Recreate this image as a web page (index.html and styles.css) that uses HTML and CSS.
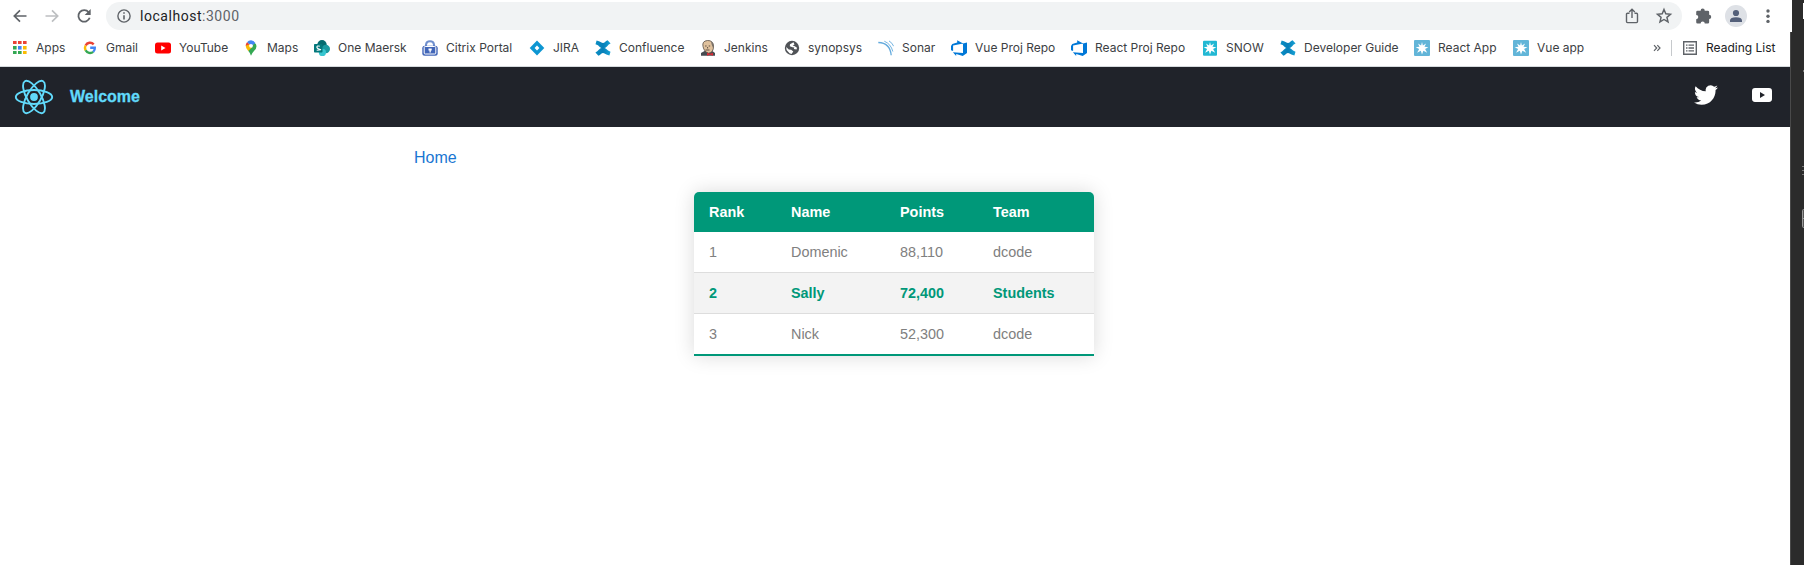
FILE: index.html
```html
<!DOCTYPE html>
<html lang="en">
<head>
<meta charset="utf-8">
<title>Welcome</title>
<link rel="stylesheet" href="styles.css">
</head>
<body>
<svg width="0" height="0" class="defs" aria-hidden="true">
  <defs>
    <linearGradient id="blue" x1="0" x2="1"><stop offset="0" stop-color="#0a8fc4"/><stop offset=".5" stop-color="#087fb8"/><stop offset="1" stop-color="#17a3d6"/></linearGradient>
    <symbol id="confluence" viewBox="0 0 16 16"><path fill="url(#blue)" d="M1.6.6 .5 4.3Q3.2 5 5 7.2 6.2 8.3 8 8.3 10.8 8.2 12.2 6.2 13.5 4.4 15.6 3.6L12.6.2Q11 .8 9.8 2.2 8.7 3.3 7 2.8 4.8 1.5 1.6.6z"/><path fill="url(#blue)" d="M14.4 15.4 15.5 11.7Q12.8 11 11 8.8 9.8 7.7 8 7.7 5.2 7.8 3.8 9.8 2.5 11.6.4 12.4L3.4 15.8Q5 15.2 6.2 13.8 7.3 12.7 9 13.2 11.2 14.5 14.4 15.4z"/></symbol>
    <symbol id="azure" viewBox="0 0 16 16"><path fill="#0078d7" d="M16 2.6V12.9L11.7 16 5.2 14.1V16L1.9 12.3 12 13V3.5zM12.1 3.5 6.2.2V2.4L1.3 4 0 5.9V10.2L2.1 11.1V5.4z"/></symbol>
    <symbol id="star" viewBox="0 0 16 16"><path fill="#fff" d="M8 2 8.9 5.5 12.1 3.4 10.5 6.8 14.4 7.3 11.1 9 13.2 12.7 9.4 10.7 8 14.5 6.8 10.7 3.1 12.7 5.1 9 1.6 7.3 5.5 6.8 4 3.4 7.1 5.5z"/></symbol>
  </defs>
</svg>
<div class="desktop">
  <div class="browser">
    <div class="toolbar">
      <svg class="nav" viewBox="0 0 16 16" fill="none" stroke="#5f6368" stroke-width="1.7"><path d="M14.5 8H2.5M8 2.3 2.3 8 8 13.7"/></svg>
      <svg class="nav" viewBox="0 0 16 16" fill="none" stroke="#bdbfc1" stroke-width="1.7"><path d="M1.5 8H13.5M8 2.3 13.7 8 8 13.7"/></svg>
      <svg class="nav reload" viewBox="0 0 16 16"><path d="M12.7 4.2A5.8 5.8 0 1 0 13.7 9.8" fill="none" stroke="#5f6368" stroke-width="1.8"/><path fill="#5f6368" d="M14.7 1V7H8.7z"/></svg>
      <div class="address">
        <svg class="info" viewBox="0 0 14 14"><circle cx="7" cy="7" r="6.1" fill="none" stroke="#5f6368" stroke-width="1.4"/><path fill="#5f6368" d="M6.2 3.3h1.6v1.5H6.2zM6.2 6.2h1.6v4.4H6.2z"/></svg>
        <span class="url">localhost<span>:3000</span></span>
        <svg class="share" viewBox="0 0 14 16" fill="none" stroke="#5f6368" stroke-width="1.4"><path d="M4.5 5.2H2.5Q1.5 5.2 1.5 6.2V13.5Q1.5 14.6 2.5 14.6H11.5Q12.5 14.6 12.5 13.5V6.2Q12.5 5.2 11.5 5.2H9.5M7 10V1.5M4.2 4 7 1.2 9.8 4"/></svg>
        <svg class="fav" viewBox="0 0 16 16"><path d="M8 2.2 9.6 6 13.8 6.4 10.6 9.2 11.6 13.3 8 11.1 4.4 13.3 5.4 9.2 2.2 6.4 6.4 6z" fill="none" stroke="#5f6368" stroke-width="1.3"/></svg>
      </div>
      <svg class="puzzle" viewBox="0.8 0.8 14.6 14.6"><path fill="#5f6368" d="M5 3.2A1.9 1.9 0 0 1 8.8 3.2H11.5Q12.8 3.2 12.8 4.5V7A1.9 1.9 0 0 1 12.8 10.8V13.7Q12.8 15 11.5 15H8.8A1.9 1.9 0 0 0 5 15H2.2Q1 15 1 13.7V11A1.9 1.9 0 0 0 1 7.2V4.5Q1 3.2 2.2 3.2z"/></svg>
      <svg class="avatar" viewBox="0 0 22 22"><circle cx="11" cy="11" r="11" fill="#dee1e6"/><circle cx="11" cy="8" r="3.1" fill="#54607a"/><path fill="#54607a" d="M5 17V15.2Q5.3 12.2 11 12.2T17 15.2V17z"/></svg>
      <svg class="more" viewBox="0 0 4 16" fill="#5f6368"><circle cx="2" cy="3" r="1.7"/><circle cx="2" cy="8.2" r="1.7"/><circle cx="2" cy="13.4" r="1.7"/></svg>
    </div>
    <div class="bookmarks">
      <div class="links">
        <div class="mark"><svg viewBox="0 0 16 16"><path fill="#ea4335" d="M1 1h3.6v3H1zM6 1h3.6v3H6zM11 1h3.6v3H11z"/><path fill="#34a853" d="M1 6h3.6v3.6H1zM1 11h3.6v3H1zM6 11h3.6v3H6z"/><path fill="#4285f4" d="M6 6h3.6v3.6H6z"/><path fill="#fbbc04" d="M11 6h3.6v3.6H11zM11 11h3.6v3H11z"/></svg><span>Apps</span></div>
        <div class="mark"><svg viewBox="0 0 16 16" fill="none" stroke-width="2.4"><path stroke="#ea4335" d="M3.6 5.5A5 5 0 0 1 11.7 4.3"/><path stroke="#fbbc04" d="M3.6 5.5A5 5 0 0 0 3.6 10.3"/><path stroke="#34a853" d="M3.6 10.3A5 5 0 0 0 11.2 11.8"/><path stroke="#4285f4" d="M11.2 11.8A5 5 0 0 0 12.8 7.8H8.2"/></svg><span>Gmail</span></div>
        <div class="mark"><svg viewBox="0 0 16 16"><rect y="2.5" width="16" height="11" rx="2.5" fill="#f00"/><path fill="#fff" d="M6.2 5.5v5L10.5 8z"/></svg><span>YouTube</span></div>
        <div class="mark"><svg viewBox="0 0 16 16"><path fill="#34a853" d="M8 15.7Q7.4 13.2 5 10.5L11.5 2.7Q13.5 4 13.5 6.2T11 11Q8.8 13.3 8 15.7z"/><path fill="#4285f4" d="M4 2.2 8.3 6.2 12.3 3Q10.8.3 8 .3 5.5.3 4 2.2z"/><path fill="#ea4335" d="M4 2.2 6.7 4.5 4.5 7.2 2.7 5.8Q2.6 3.8 4 2.2z"/><path fill="#fbbc04" d="M2.7 5.8 6.8 4.2 9.4 6.9 5.2 10.9Q2.7 8.3 2.7 5.8z"/><circle cx="8" cy="5.8" r="1.9" fill="#fff"/></svg><span>Maps</span></div>
        <div class="mark"><svg viewBox="0 0 16 16"><circle cx="8" cy="4.7" r="4.7" fill="#036c70"/><circle cx="11.8" cy="9" r="4.2" fill="#1a9ba1"/><circle cx="8.4" cy="12.4" r="3.6" fill="#37c6d0"/><rect y="4" width="8.5" height="8.5" rx=".7" fill="#03787c"/><path d="M5.8 6.3Q3 5.3 2.9 7T5.7 9.2 2.7 10.2" fill="none" stroke="#fff" stroke-width="1.1"/></svg><span>One Maersk</span></div>
        <div class="mark"><svg viewBox="0 0 16 16"><path d="M4 7V4.6Q4.4 1.3 8 1.3t4 3.3V7" fill="none" stroke="#6f8fce" stroke-width="2"/><rect x=".3" y="5.7" width="15.4" height="10" rx="2.5" fill="#4266b8"/><rect x="2.2" y="6.5" width="11.6" height="7.5" rx="1" fill="none" stroke="#fff" stroke-width="1"/><path d="M6.5 8.5h3.2v1.9h-.9V12.4H7.5v-2h-1z" fill="#fff"/></svg><span>Citrix Portal</span></div>
        <div class="mark"><svg viewBox="0 0 16 16"><path fill="#0d96d2" d="M8 .5 15.3 8 8 15.5.7 8z"/><path fill="#fff" d="M8 5.6 10.4 8 8 10.4 5.6 8z"/></svg><span>JIRA</span></div>
        <div class="mark"><svg><use href="#confluence"/></svg><span>Confluence</span></div>
        <div class="mark"><svg viewBox="0 0 16 16"><path d="M1 15.8V13L5 10.7h7l3 2.2v2.9z" fill="#454b50"/><path d="M3 6.5Q1.8 1 7.5.5q5.6-.2 6 5.5.2 6.5-4.8 7.2Q4.2 12 3 6.5z" fill="#dfc19d" stroke="#554b43" stroke-width=".8"/><path d="M11 1.7Q14.5 3 13.2 8L11.8 5z" fill="#77706a"/><path d="M5.1 6h1.5M8.7 6h1.5M7.6 7v1.5M5.5 10h4" stroke="#40352f" stroke-width=".8"/><path d="m7 12.7 3 1 3-1v3.1l-3-1-3 1z" fill="#d52b36"/></svg><span>Jenkins</span></div>
        <div class="mark"><svg viewBox="0 0 16 16"><circle cx="8" cy="8" r="7.2" fill="#505357"/><path fill="#fff" d="M9.5 2.2 6 4.2 5.8 6.3 8.5 7.2 10.3 7.5 9.8 9 12.5 9.5 13 7.8 10.8 6.3 8.7 5.5 10.5 4.5zM2.2 7 2.6 10 5.5 13.3 7.5 13.9 9.3 11.5 7.2 9.8 4.8 9.5z"/></svg><span>synopsys</span></div>
        <div class="mark"><svg viewBox="0 0 16 16" fill="none" stroke="#63aadd"><path d="M.3 2.5Q12 2.8 13.2 15.2" stroke-width="1.3"/><path d="M6.3 1.2Q13 4 14.8 11.5M11 .9Q14.4 3 15.6 6.2" stroke-width=".9"/></svg><span>Sonar</span></div>
        <div class="mark"><svg><use href="#azure"/></svg><span>Vue Proj Repo</span></div>
        <div class="mark"><svg><use href="#azure"/></svg><span>React Proj Repo</span></div>
        <div class="mark"><svg viewBox="0 0 16 16"><rect x="1" y=".7" width="14" height="15" rx="1" fill="#22b8d3"/><use href="#star"/></svg><span>SNOW</span></div>
        <div class="mark"><svg><use href="#confluence"/></svg><span>Developer Guide</span></div>
        <div class="mark"><svg viewBox="0 0 16 16"><rect width="16" height="16" rx="1" fill="#62b5d8"/><use href="#star"/></svg><span>React App</span></div>
        <div class="mark"><svg viewBox="0 0 16 16"><rect width="16" height="16" rx="1" fill="#62b5d8"/><use href="#star"/></svg><span>Vue app</span></div>
      </div>
      <svg class="overflow" viewBox="0 0 8 8" fill="none" stroke="#5f6368" stroke-width="1.2"><path d="M1 1.2 3.7 4 1 6.8M4.3 1.2 7 4 4.3 6.8"/></svg>
      <div class="reading">
        <svg viewBox="0 0 14 14" fill="none" stroke="#5f6368"><path stroke-width="1.4" d="M.7.7h12.6v12.6H.7z"/><path stroke-width="1.3" d="M3 4.2h1.5M5.5 4.2H11M3 7h1.5M5.5 7H11M3 9.8h1.5M5.5 9.8H11"/></svg>
        <span>Reading List</span>
      </div>
    </div>
    <header class="header">
      <svg class="react" viewBox="0 0 40 36" fill="none" stroke="#61dafb" stroke-width="1.9"><circle cx="20" cy="18" r="3.9" fill="#61dafb" stroke="none"/><ellipse cx="20" cy="18" rx="18.2" ry="7"/><ellipse cx="20" cy="18" rx="18.2" ry="7" transform="rotate(60 20 18)"/><ellipse cx="20" cy="18" rx="18.2" ry="7" transform="rotate(120 20 18)"/></svg>
      <span class="welcome">Welcome</span>
      <svg class="twitter" viewBox="0 0 24 24"><path fill="#fff" d="M23.95 4.57a10 10 0 0 1-2.82.77 4.96 4.96 0 0 0 2.16-2.72c-.95.55-2 .96-3.13 1.18a4.92 4.92 0 0 0-8.38 4.48C7.69 8.1 4.07 6.13 1.64 3.16a4.9 4.9 0 0 0 1.52 6.57 4.9 4.9 0 0 1-2.23-.61v.06a4.92 4.92 0 0 0 3.95 4.83 5 5 0 0 1-2.21.08 4.94 4.94 0 0 0 4.6 3.42A9.87 9.87 0 0 1 0 19.54a13.99 13.99 0 0 0 7.55 2.21c9.14 0 14.3-7.72 14.01-14.64a10 10 0 0 0 2.39-2.54z"/></svg>
      <svg class="youtube" viewBox="0 0 20 14"><path fill="#fff" fill-rule="evenodd" d="M3 0Q10-.5 17 0 20 .2 20 3v8q0 2.7-3 3-7 .5-14 0-3-.3-3-3V3Q0 .2 3 0zM8 4v6l5-3z"/></svg>
    </header>
    <main class="page">
      <a class="home">Home</a>
      <table class="scores">
        <colgroup><col class="rank"><col class="name"><col class="points"><col class="team"></colgroup>
        <thead><tr><th>Rank</th><th>Name</th><th>Points</th><th>Team</th></tr></thead>
        <tbody>
          <tr><td>1</td><td>Domenic</td><td>88,110</td><td>dcode</td></tr>
          <tr class="active"><td>2</td><td>Sally</td><td>72,400</td><td>Students</td></tr>
          <tr><td>3</td><td>Nick</td><td>52,300</td><td>dcode</td></tr>
        </tbody>
      </table>
    </main>
  </div>
  <svg class="behind" viewBox="0 0 14 565"><path fill="#2b2b2b" d="M0 0h14v565H0z"/><path fill="#fff" d="M0 0h2v32H0z"/><path fill="#4a4a4a" d="M0 32h1v533H0z"/><path fill="#fff" d="M13 3h1v16h-1z"/><path fill="#777" d="M13 70h1v2h-1zM12 166h2v1h-2zM12 170h2v1h-2zM12 174h2v1h-2z"/><path fill="#555" stroke="#999" d="M16 209.5h-2.5q-1 0-1 1v16q0 1 1 1H16zM12.5 218.5H16"/></svg>
</div>
</body>
</html>
```

FILE: styles.css
```css
* { box-sizing: border-box; }
body { margin: 0; background: #fff; font-family: "Liberation Sans", Arial, sans-serif; overflow: hidden; }
svg { display: block; flex: none; }
.defs { position: absolute; }
.desktop { display: flex; width: 1804px; height: 565px; }
.browser { width: 1790px; }
.behind { width: 14px; height: 565px; }

.toolbar { display: flex; align-items: center; height: 32px; padding-left: 12px; }
.nav { width: 16px; height: 16px; margin-right: 16px; }
.reload { margin-right: 14px; }
.address { display: flex; align-items: center; width: 1576px; height: 28px; padding: 0 10px 0 11px; border-radius: 14px; background: #f1f3f4; }
.info { width: 14px; height: 14px; }
.url { margin: 0 auto 0 9px; font: 14px/28px Roboto, sans-serif; letter-spacing: .53px; color: #202124; }
.url span { color: #5f6368; }
.share { width: 14px; height: 16px; margin-right: 16px; }
.fav { width: 18px; height: 18px; margin-right: -1px; }
.puzzle { width: 16px; height: 16px; margin-left: 14px; }
.avatar { width: 22px; height: 22px; margin-left: 13px; }
.more { width: 4px; height: 16px; margin-left: 19px; }

.bookmarks { display: flex; align-items: center; height: 35px; padding: 0 0 3px 12px; border-bottom: 1px solid #d5dadd; font: 12px/16px Inter, sans-serif; color: #3c4043; white-space: nowrap; }
.links { display: grid; grid-template-columns: 70px 73px 88px 71px 108px 107px 66px 105px 84px 94px 73px 120px 131px 78px 134px 99px 70px; width: 1641px; }
.mark { display: flex; gap: 8px; }
.mark svg { width: 16px; height: 16px; }
.overflow { width: 8px; height: 8px; }
.reading { display: flex; align-items: center; gap: 9px; height: 16px; margin-left: 10px; padding-left: 11px; border-left: 1px solid #c6c9cc; color: #202124; }
.reading svg { width: 14px; height: 14px; }

.header { display: flex; align-items: center; height: 60px; padding: 0 18px 0 14px; background: #20232a; }
.react { width: 40px; height: 36px; }
.welcome { margin: 0 auto 0 16px; font-size: 16px; font-weight: 700; line-height: 18px; color: #61dafb; -webkit-text-stroke: .3px #61dafb; }
.twitter { width: 24px; height: 24px; margin: 0 34px 4px 0; }
.youtube { width: 20px; height: 14px; margin-bottom: 4px; }

.page { padding-top: 22px; }
.home { display: block; margin-left: 414px; font-size: 16px; line-height: 18px; color: #1976d2; }
.scores { width: 400px; margin: 25px 0 0 694px; border-collapse: separate; border-spacing: 0; table-layout: fixed; border-radius: 5px 5px 0 0; overflow: hidden; box-shadow: 0 0 20px rgba(0, 0, 0, .15); font-size: 14.4px; line-height: 16px; color: #808080; }
.rank { width: 82px; }
.name { width: 109px; }
.points { width: 93px; }
.team { width: 116px; }
.scores th, .scores td { padding: 12px 15px; text-align: left; }
.scores thead tr { background: #009879; color: #fff; }
.scores tbody td { border-bottom: 1px solid #ddd; }
.scores tbody tr.active { background: #f3f3f3; color: #009879; font-weight: 700; }
.scores tbody tr:last-child td { border-bottom: 2px solid #009879; }
```
